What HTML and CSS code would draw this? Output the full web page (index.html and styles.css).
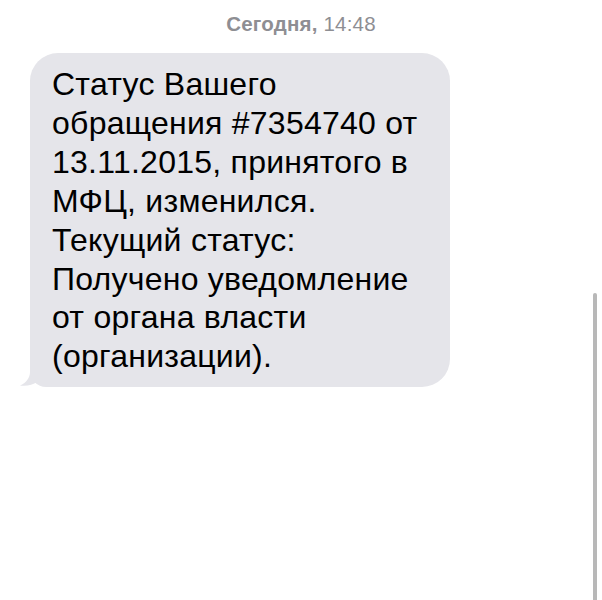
FILE: index.html
```html
<!DOCTYPE html>
<html lang="ru">
<head>
<meta charset="utf-8">
<link rel="stylesheet" href="styles.css">
</head>
<body>
<div class="screen">
  <div class="date"><b>Сегодня,</b> 14:48</div>
  <div class="bubble">
    <svg class="tail" width="30" height="34" viewBox="0 0 30 34"><path d="M12,5 L12,17 C12,23 8,28 2,30.5 C8,31.5 15,30 19,27 L24,15 L24,5 Z" fill="#e5e5ea"/></svg>
    <div class="text">Статус Вашего<br>обращения #7354740 от<br>13.11.2015, принятого в<br>МФЦ, изменился.<br>Текущий статус:<br>Получено уведомление<br>от органа власти<br>(организации).</div>
  </div>
  <div class="scrollbar"></div>
</div>
</body>
</html>
```
FILE: styles.css
```css
html, body {
  margin: 0;
  padding: 0;
  background: #ffffff;
}
.screen {
  position: relative;
  width: 602px;
  height: 600px;
  overflow: hidden;
  font-family: "Liberation Sans", Arial, sans-serif;
}
.date {
  padding-top: 12px;
  height: 24px;
  line-height: 24px;
  font-size: 20.5px;
  letter-spacing: 0.2px;
  color: #8e8e93;
  text-align: center;
}
.date b {
  font-weight: bold;
}
.bubble {
  position: relative;
  margin: 17px 0 0 30px;
  width: 420px;
  box-sizing: border-box;
  padding: 12px 10px 11px 22px;
  background: #e5e5ea;
  border-radius: 28px 28px 28px 16px;
}
.tail {
  position: absolute;
  left: -12px;
  bottom: -2px;
}
.text {
  position: relative;
  font-size: 32px;
  line-height: 38.9px;
  letter-spacing: 0.25px;
  color: #000000;
  white-space: nowrap;
}
.scrollbar {
  position: absolute;
  left: 593px;
  top: 293px;
  width: 4px;
  height: 320px;
  border-radius: 2px;
  background: #b8b8b8;
}
```
